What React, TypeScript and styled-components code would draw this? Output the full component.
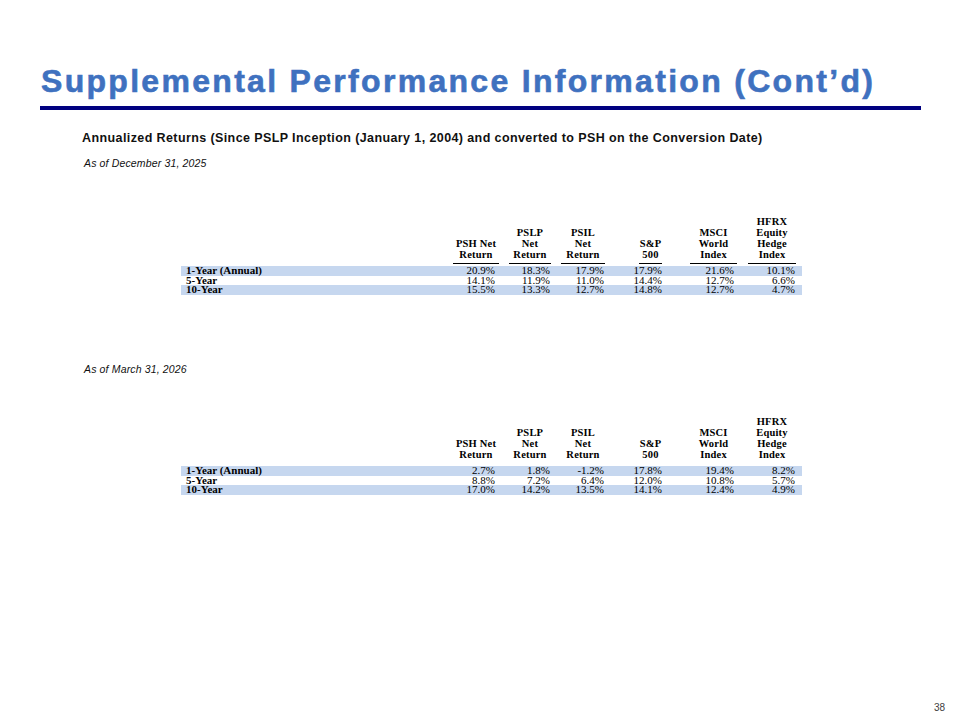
import React from "react";
import styled, { createGlobalStyle } from "styled-components";

const Global = createGlobalStyle`
  html, body { margin: 0; padding: 0; background: #ffffff; }
  * { box-sizing: border-box; }
`;

const Page = styled.div`
  width: 960px;
  height: 720px;
  display: flex;
  flex-direction: column;
  background: #ffffff;
  font-family: "Liberation Sans", Arial, sans-serif;
  color: #000;
  overflow: hidden;
`;

const TitleBlock = styled.header`
  padding: 65px 39px 0 40px;
`;

const Title = styled.h1`
  margin: 0 0 0 1px;
  font-family: "Liberation Sans", Arial, sans-serif;
  font-weight: 700;
  font-size: 32px;
  line-height: 32px;
  letter-spacing: 2.3px;
  color: #3f71bf;
  -webkit-text-stroke: 0.6px #3f71bf;
  white-space: nowrap;
`;

const Rule = styled.div`
  margin-top: 9px;
  height: 4px;
  background: #000080;
`;

const Content = styled.main`
  padding-left: 82px;
  display: flex;
  flex-direction: column;
`;

const Subtitle = styled.h2`
  margin: 21.5px 0 0 0;
  font-weight: 700;
  font-size: 12.5px;
  line-height: 12px;
  letter-spacing: 0.4px;
  color: #111;
  white-space: nowrap;
`;

const AsOf = styled.div<{ $top: number }>`
  margin-top: ${(p) => p.$top}px;
  padding-left: 2px;
  font-style: italic;
  font-size: 10.5px;
  line-height: 12px;
  letter-spacing: 0.15px;
  color: #111;
`;

const Table = styled.div<{ $top: number }>`
  margin-top: ${(p) => p.$top}px;
  margin-left: 99px;
  width: 621px;
  font-family: "Liberation Serif", "Times New Roman", serif;
  color: #000;
`;

const Grid = styled.div<{ $shaded?: boolean }>`
  display: grid;
  grid-template-columns: 272px 46px 52px 54px 57px 75px 59px;
  padding-right: 6px;
  align-items: end;
  background: ${(p) => (p.$shaded ? "#c6d7ef" : "transparent")};
`;

const HeadGrid = styled(Grid)`
  margin-bottom: 2px;
`;

const HeadCell = styled.div`
  display: flex;
  justify-content: flex-end;
`;

const HeadLabel = styled.div<{ $w: number; $underline: boolean }>`
  width: ${(p) => p.$w}px;
  text-align: center;
  font-weight: 700;
  font-size: 10.5px;
  letter-spacing: 0.2px;
  line-height: 11px;
  padding-bottom: 3.5px;
  border-bottom: 1px solid ${(p) => (p.$underline ? "#000" : "transparent")};
  white-space: nowrap;
`;

const RowLabel = styled.div`
  font-weight: 700;
  font-size: 11px;
  padding-left: 5px;
  height: 9.5px;
  line-height: 9.5px;
  white-space: nowrap;
`;

const Value = styled.div<{ $pad: number }>`
  text-align: right;
  font-size: 11px;
  padding-right: ${(p) => p.$pad}px;
  height: 9.5px;
  line-height: 9.5px;
  white-space: nowrap;
`;

const Footer = styled.footer`
  margin-top: auto;
  padding: 0 15px 6px 0;
  text-align: right;
  font-size: 10px;
  line-height: 12px;
  color: #404040;
`;

type Col = { lines: string[]; w: number; pad: number };

const columns: Col[] = [
  { lines: ["PSH Net", "Return"], w: 46, pad: 4 },
  { lines: ["PSLP", "Net", "Return"], w: 42, pad: 1 },
  { lines: ["PSIL", "Net", "Return"], w: 44, pad: 1 },
  { lines: ["S&P", "500"], w: 23, pad: 0 },
  { lines: ["MSCI", "World", "Index"], w: 47, pad: 3 },
  { lines: ["HFRX", "Equity", "Hedge", "Index"], w: 48, pad: 1 },
];

type Row = { label: string; values: string[] };

const dec2025: Row[] = [
  { label: "1-Year (Annual)", values: ["20.9%", "18.3%", "17.9%", "17.9%", "21.6%", "10.1%"] },
  { label: "5-Year", values: ["14.1%", "11.9%", "11.0%", "14.4%", "12.7%", "6.6%"] },
  { label: "10-Year", values: ["15.5%", "13.3%", "12.7%", "14.8%", "12.7%", "4.7%"] },
];

const mar2026: Row[] = [
  { label: "1-Year (Annual)", values: ["2.7%", "1.8%", "-1.2%", "17.8%", "19.4%", "8.2%"] },
  { label: "5-Year", values: ["8.8%", "7.2%", "6.4%", "12.0%", "10.8%", "5.7%"] },
  { label: "10-Year", values: ["17.0%", "14.2%", "13.5%", "14.1%", "12.4%", "4.9%"] },
];

function ReturnsTable({ rows, underline, top }: { rows: Row[]; underline: boolean; top: number }) {
  return (
    <Table $top={top}>
      <HeadGrid>
        <div />
        {columns.map((c, i) => (
          <HeadCell key={i}>
            <HeadLabel $w={c.w} $underline={underline}>
              {c.lines.map((l, j) => (
                <div key={j}>{l}</div>
              ))}
            </HeadLabel>
          </HeadCell>
        ))}
      </HeadGrid>
      {rows.map((r, i) => (
        <Grid key={r.label} $shaded={i % 2 === 0}>
          <RowLabel>{r.label}</RowLabel>
          {r.values.map((v, j) => (
            <Value key={j} $pad={columns[j].pad}>
              {v}
            </Value>
          ))}
        </Grid>
      ))}
    </Table>
  );
}

export default function App() {
  return (
    <>
      <Global />
      <Page>
        <TitleBlock>
          <Title>Supplemental Performance Information (Cont’d)</Title>
          <Rule />
        </TitleBlock>
        <Content>
          <Subtitle>
            Annualized Returns (Since PSLP Inception (January 1, 2004) and converted to PSH on the Conversion Date)
          </Subtitle>
          <AsOf $top={13.5}>As of December 31, 2025</AsOf>
          <ReturnsTable rows={dec2025} underline={true} top={46.5} />
          <AsOf $top={68.5}>As of March 31, 2026</AsOf>
          <ReturnsTable rows={mar2026} underline={false} top={40.5} />
        </Content>
        <Footer>38</Footer>
      </Page>
    </>
  );
}
